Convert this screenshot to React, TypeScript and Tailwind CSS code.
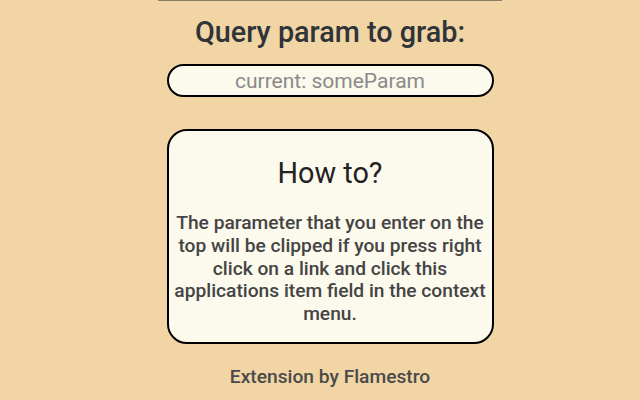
export default function App() {
  return (
    <div className="flex h-[400px] w-[640px] flex-col items-center bg-[#f2d5a5] pl-[20px] font-['Roboto',sans-serif] text-[#333]">
      <div className="h-px w-[344px] bg-[#8c7b66]" />
      <h1 className="mt-[14px] text-[28.8px] leading-[34px] font-medium text-[#2f3438]">Query param to grab:</h1>
      <input
        className="mt-[15px] h-[33px] w-[327px] rounded-full border-2 border-black bg-[#fcf9ed] text-center text-[21px] text-[#333] outline-none placeholder:text-[#8a8a8a]"
        placeholder="current: someParam"
      />
      <div className="mt-[32px] flex h-[215px] w-[327px] flex-col items-center rounded-[20px] border-2 border-black bg-[#fcf9ed] px-[4px]">
        <h2 className="mt-[25px] text-[28.8px] leading-[34px] text-[#222]">How to?</h2>
        <p className="mt-[22px] text-center text-[19.2px] leading-[22.8px] font-medium text-[#444]">
          The parameter that you enter on the top will be clipped if you press right click on a link and click this
          applications item field in the context menu.
        </p>
      </div>
      <p className="mt-[21px] text-[19.2px] leading-[23px] font-medium text-[#4a4a4a]">Extension by Flamestro</p>
    </div>
  );
}
